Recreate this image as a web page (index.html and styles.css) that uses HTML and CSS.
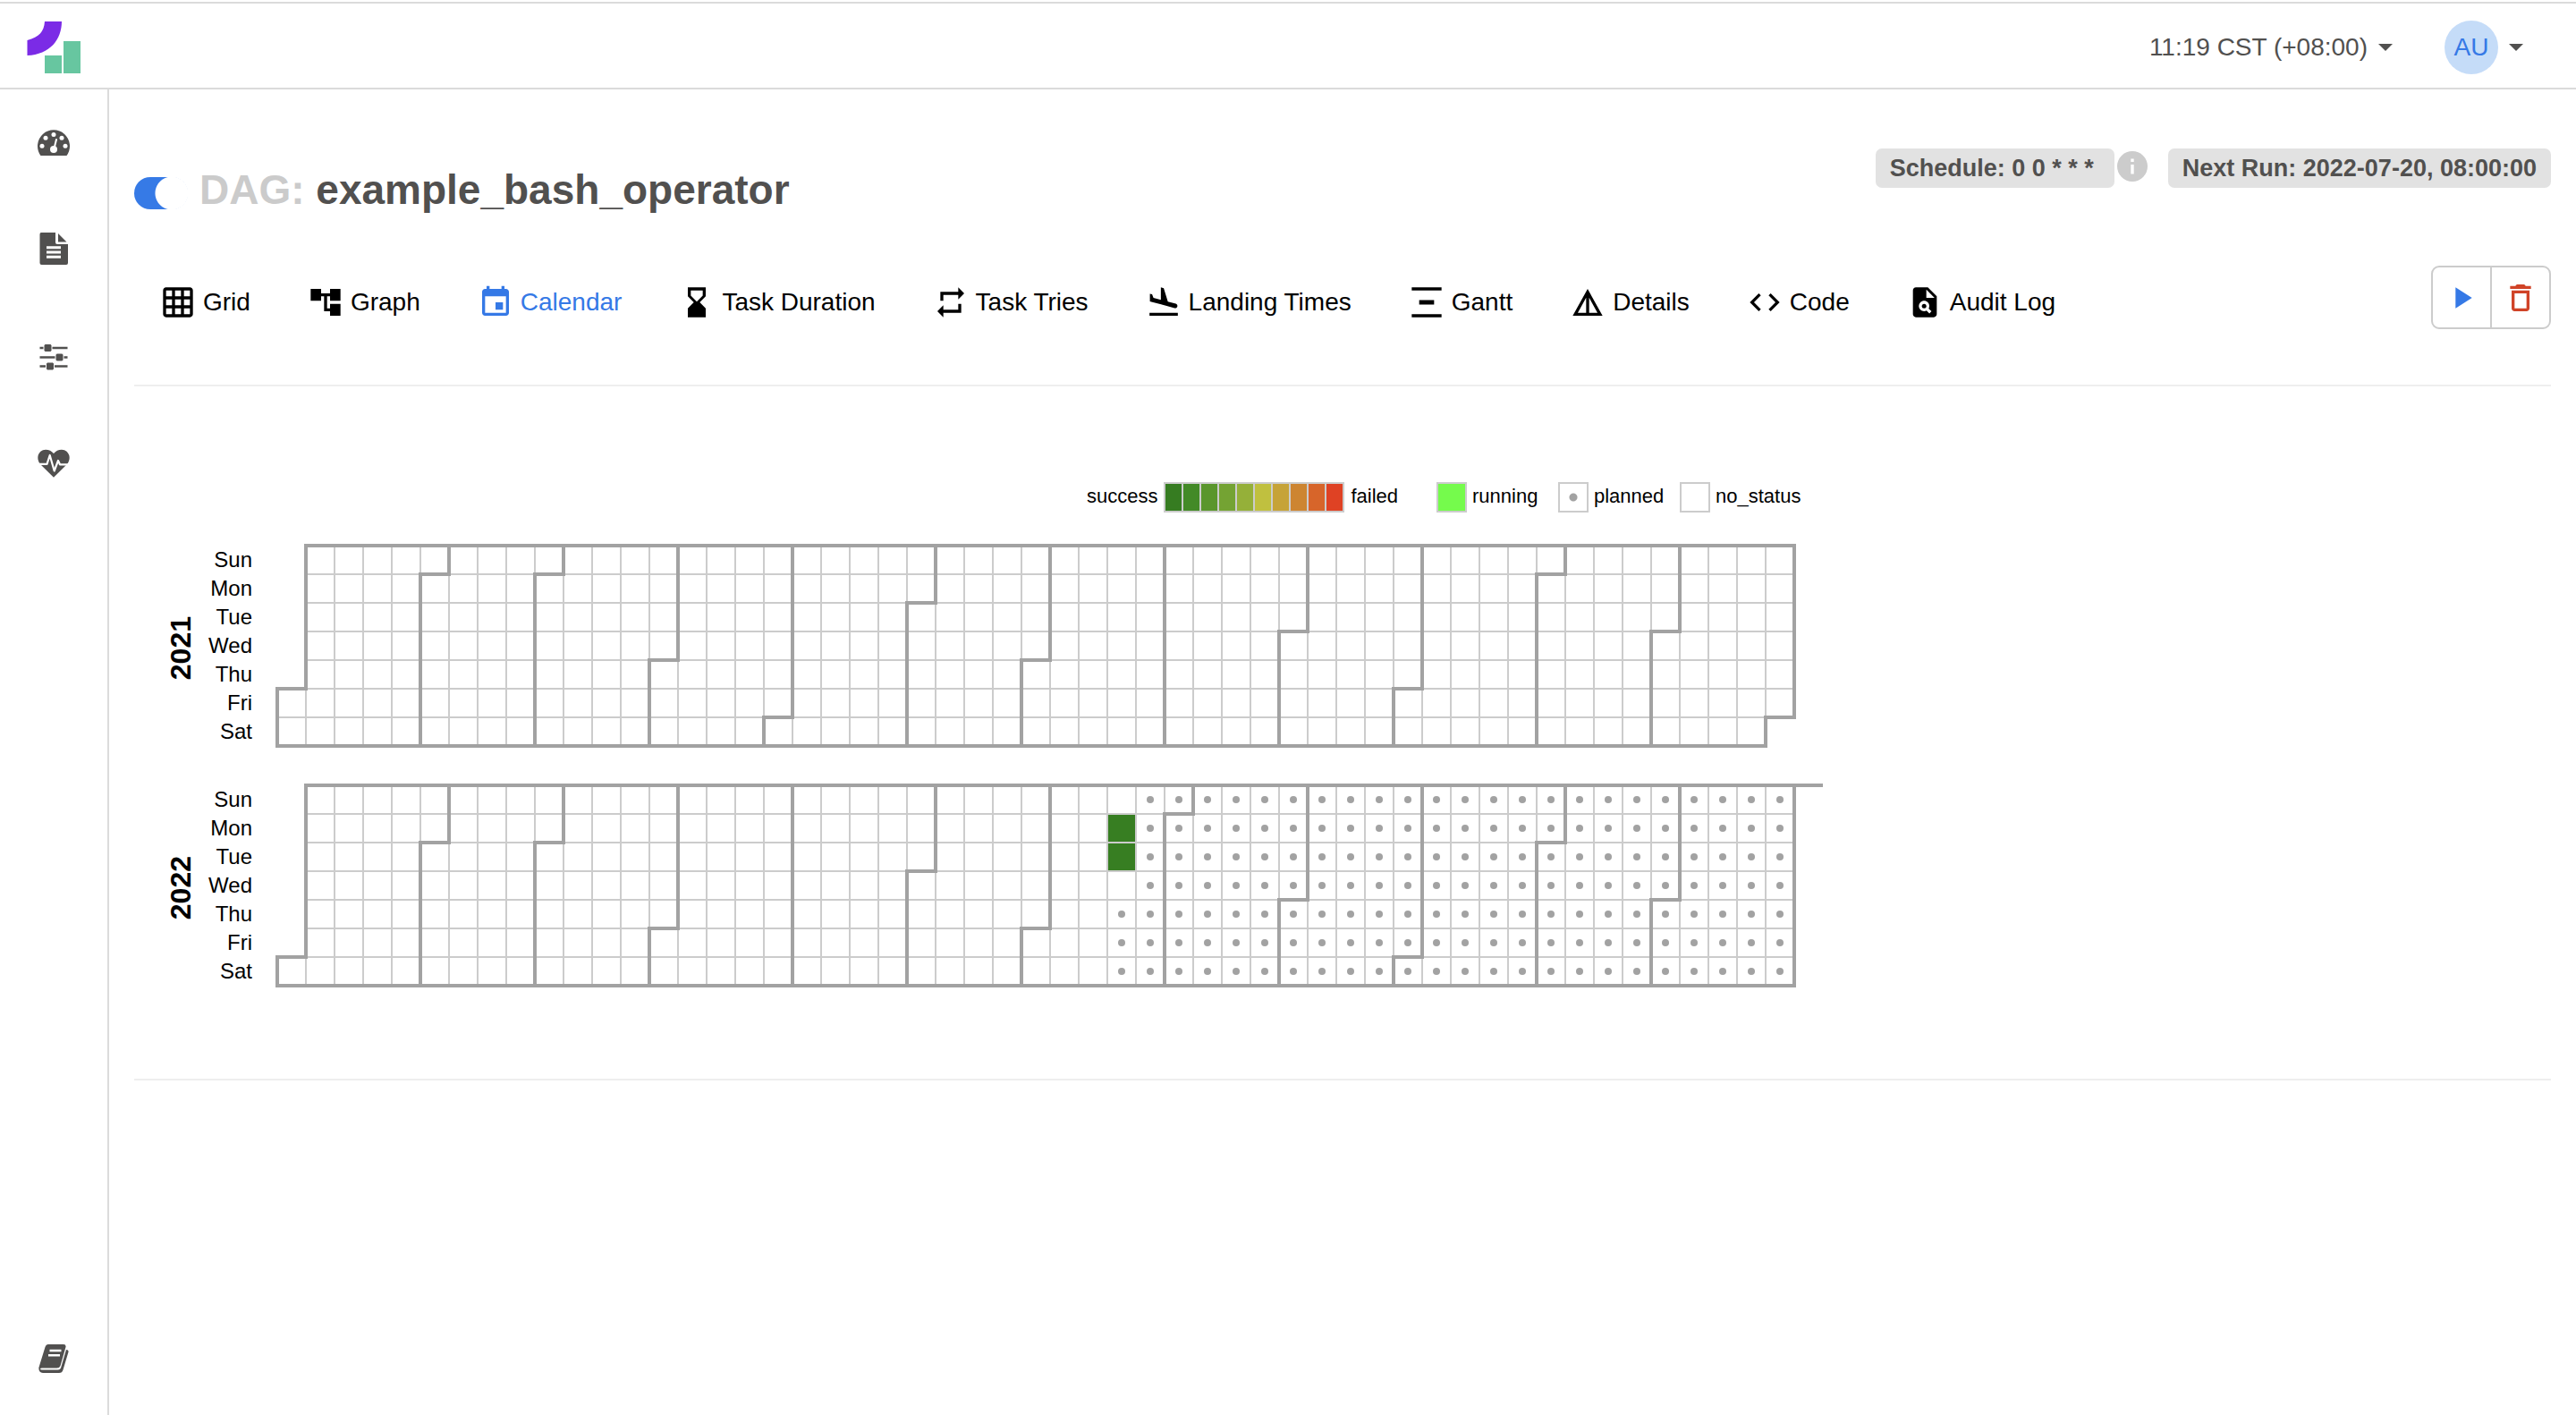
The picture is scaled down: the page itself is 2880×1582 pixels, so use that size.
FILE: index.html
```html
<!DOCTYPE html>
<html lang="en">
<head>
<meta charset="utf-8">
<title>example_bash_operator - Calendar - Airflow</title>
<link rel="stylesheet" href="styles.css">
</head>
<body>
<header class="topbar">
  <a class="brand" href="#" aria-label="Home">
    <svg width="60" height="58" viewBox="0 0 60 58"><path fill="#7b2be6" d="M20 0h19C39 20 26 37 0.500 38V21C14 17 19 12 20 0z"/><path fill="#67c6a0" d="M20 38h19v20H20zM41 22h19v36H41z"/></svg>
  </a>
  <div class="topbar-menus">
    <button class="menu" type="button">11:19 CST (+08:00)<span class="caret"></span></button>
    <button class="menu" type="button" aria-label="User menu"><span class="avatar">AU</span><span class="caret"></span></button>
  </div>
</header>
<div class="shell">
  <nav class="sidebar" aria-label="Main">
    <a href="#" aria-label="DAGs"><svg class="side-icon" viewBox="0 0 40 40"><path d="M5.500 34A18 18 0 1 1 34.500 34z"/><g fill="#fff"><circle cx="7" cy="23.300" r="2.500"/><circle cx="11" cy="14.300" r="2.500"/><circle cx="20" cy="10.600" r="2.500"/><circle cx="29" cy="14.300" r="2.500"/><circle cx="33" cy="23.300" r="2.500"/><circle cx="20" cy="27" r="4"/></g><path d="M20.500 26L23 16" stroke="#fff" stroke-width="2" stroke-linecap="round"/></svg></a>
    <a href="#" aria-label="Datasets"><svg class="side-icon" viewBox="0 0 40 40"><path d="M6 0h16v11q0 2 2 2h12v21q0 2-2 2H6.500q-2 0-2-2V2q0-2 1.500-2zM25 1l9.500 9.500H25z"/><path d="M12 16.800h16M12 22h16M12 27.200h16" stroke="#fff" stroke-width="3"/></svg></a>
    <a href="#" aria-label="Admin"><svg class="side-icon" viewBox="0 0 40 40"><path d="M4.500 9h31M4.500 19.500h31M4.500 29.500h31" stroke="#51504f" stroke-width="2.600"/><g stroke="#fff" stroke-width="1"><rect x="9" y="4.500" width="9" height="9" rx="2"/><rect x="22" y="15" width="9" height="9" rx="2"/><rect x="11.500" y="25" width="9" height="9" rx="2"/></g></svg></a>
    <a href="#" aria-label="Health"><svg class="side-icon" viewBox="0 0 40 40"><path d="M20 33.700L5 19C-1 11 4 2.700 11 2.700Q16.500 2.700 20 7Q23.500 2.700 29 2.700C36 2.700 41 11 35 19z"/><path d="M1 18.800h11.500L15.700 9l5 17.500L25 15l2 4.300h12" fill="none" stroke="#fff" stroke-width="2.200" stroke-linejoin="round"/></svg></a>
    <a class="sidebar-docs" href="#" aria-label="Documentation"><svg class="side-icon" viewBox="0 0 40 40"><path d="M14 5h17q3 0 2.500 3l-6 21q-1 2.500-4 2.500H7q-2 0-2 1t2 1h18q2 0 3-2l6-20.500q3 0 2.500 2.500l-6 20q-1 3.500-4.500 3.500H8q-5 0-4.600-6L10.500 8q1-3 3.500-3z"/><path d="M15.500 12h13M14 17.300h13" stroke="#fff" stroke-width="2.400"/></svg></a>
  </nav>
  <main class="content">
    <div class="dag-head">
      <div class="dag-title">
        <input class="toggle" type="checkbox" role="switch" id="pause" aria-label="Pause or unpause DAG" checked>
        <h1><label for="pause">DAG:</label> example_bash_operator</h1>
      </div>
      <div class="dag-labels">
        <span class="tag tag-schedule">Schedule: 0 0 * * *</span>
        <svg class="info" viewBox="0 0 24 24" role="img" aria-label="Schedule info"><circle cx="12" cy="12" r="12" fill="#ccc"/><path fill="#fff" d="M10.800 6h2.400v2.400h-2.400zM10.800 10.500h2.400V18h-2.400z"/></svg>
        <span class="tag">Next Run: 2022-07-20, 08:00:00</span>
      </div>
    </div>
    <div class="tab-row">
      <nav class="tabs" aria-label="DAG views">
        <a href="#"><svg class="icon" viewBox="0 0 24 24"><path d="M20 2H4c-1.100 0-2 .9-2 2v16c0 1.100.9 2 2 2h16c1.100 0 2-.9 2-2V4c0-1.100-.9-2-2-2zM8 20H4v-4h4v4zm0-6H4v-4h4v4zm0-6H4V4h4v4zm6 12h-4v-4h4v4zm0-6h-4v-4h4v4zm0-6h-4V4h4v4zm6 12h-4v-4h4v4zm0-6h-4v-4h4v4zm0-6h-4V4h4v4z"/></svg>Grid</a>
        <a href="#"><svg class="icon" viewBox="0 0 24 24"><path d="M22 11V3h-7v3H9V3H2v8h7V8h2v10h4v3h7v-8h-7v3h-2V8h2v3h7z"/></svg>Graph</a>
        <a class="active" href="#" aria-current="page"><svg class="icon" viewBox="0 0 24 24"><path d="M17 12h-5v5h5v-5zM16 1v2H8V1H6v2H5c-1.110 0-1.990.9-1.990 2L3 19c0 1.100.89 2 2 2h14c1.100 0 2-.9 2-2V5c0-1.100-.9-2-2-2h-1V1h-2zm3 18H5V8h14v11z"/></svg>Calendar</a>
        <a href="#"><svg class="icon" viewBox="0 0 24 24"><path d="M18 22l-.01-6L14 12l3.990-4.010L18 2H6v6l4 4-4 3.990V22h12zM8 7.500V4h8v3.500l-4 4-4-4z"/></svg>Task Duration</a>
        <a href="#"><svg class="icon" viewBox="0 0 24 24"><path d="M7 7h10v3l4-4-4-4v3H5v6h2V7zm10 10H7v-3l-4 4 4 4v-3h12v-6h-2v4z"/></svg>Task Tries</a>
        <a href="#"><svg class="icon" viewBox="0 0 24 24"><path d="M2.500 19h19v2h-19zm7.180-5.730l4.350 1.160 5.310 1.420c.8.210 1.620-.26 1.840-1.060.21-.8-.26-1.620-1.060-1.840l-5.310-1.420-2.760-9.020L10.120 2v8.280L5.150 8.950l-.93-2.320-1.450-.39v5.170l1.600.43 5.310 1.430z"/></svg>Landing Times</a>
        <a href="#"><svg class="icon" viewBox="0 0 24 24"><path d="M22 2v2H2V2h20zM7 10.500v3h10v-3H7zM2 20v2h20v-2H2z"/></svg>Gantt</a>
        <a href="#"><svg class="icon" viewBox="0 0 24 24"><path d="M12 3L2 21h20L12 3zm1 5.920L18.600 19H13V8.920zm-2 0V19H5.400L11 8.920z"/></svg>Details</a>
        <a href="#"><svg class="icon" viewBox="0 0 24 24"><path d="M9.400 16.600L4.800 12l4.600-4.600L8 6l-6 6 6 6 1.400-1.400zm5.200 0l4.600-4.600-4.600-4.600L16 6l6 6-6 6-1.400-1.400z"/></svg>Code</a>
        <a href="#"><svg class="icon" viewBox="0 0 24 24"><path d="M14 2H6c-1.100 0-1.990.9-1.990 2L4 20c0 1.100.89 2 1.990 2H18c1.100 0 2-.9 2-2V8l-6-6zm1.040 17.450-1.880-1.880c-1.330.71-3.010.53-4.130-.59-1.370-1.370-1.370-3.580 0-4.950 1.370-1.370 3.580-1.370 4.950 0 1.120 1.120 1.310 2.800.59 4.130l1.880 1.880-1.410 1.410zM13 9V3.500L18.500 9H13z"/><circle cx="11.500" cy="14.500" r="1.500"/></svg>Audit Log</a>
      </nav>
      <div class="actions">
        <button class="run" type="button" aria-label="Trigger DAG"><svg class="icon" viewBox="0 0 24 24"><path d="M8 5v14l11-7z"/></svg></button>
        <button class="delete" type="button" aria-label="Delete DAG"><svg class="icon" viewBox="0 0 24 24"><path d="M6 19c0 1.100.9 2 2 2h8c1.100 0 2-.9 2-2V7H6v12zM8 9h8v10H8V9zm7.500-5l-1-1h-5l-1 1H5v2h14V4z"/></svg></button>
      </div>
    </div>
    <hr>
    <section class="calendar" aria-label="Calendar">
      <div class="legend">
        <div class="scale">
          <span>success</span>
          <span class="ramp"><i class="r0"></i><i class="r1"></i><i class="r2"></i><i class="r3"></i><i class="r4"></i><i class="r5"></i><i class="r6"></i><i class="r7"></i><i class="r8"></i><i class="r9"></i></span>
          <span>failed</span>
        </div>
        <ul class="states">
          <li><span class="box running"></span>running</li>
          <li><span class="box planned"></span>planned</li>
          <li><span class="box"></span>no_status</li>
        </ul>
      </div>
      <div class="year">
        <h2>2021</h2>
        <ul class="days"><li>Sun</li><li>Mon</li><li>Tue</li><li>Wed</li><li>Thu</li><li>Fri</li><li>Sat</li></ul>
        <svg class="plot" width="1732" height="228" viewBox="-2 -2 1732 228" role="img" aria-label="Runs in 2021">
          <defs>
            <pattern id="cell" width="32" height="32" patternUnits="userSpaceOnUse"><path fill="#ccc" d="M0 0h32v32H0z"/><path fill="#fff" d="M1 1h30v30H1z"/></pattern>
            <pattern id="dot" width="32" height="32" patternUnits="userSpaceOnUse"><circle cx="16" cy="16" r="4" fill="#a2a2a2"/></pattern>
          </defs>
          <path fill="url(#cell)" d="M32 0H1696V192H1664V224H0V160H32z"/>
          <path class="months" d="M32 0H1696V192H1664V224H0V160H32zM192 0V32H160V224M320 0V32H288V224M448 0V128H416V224M576 0V192H544V224M736 0V64H704V224M864 0V128H832V224M992 0V224M1152 0V96H1120V224M1280 0V160H1248V224M1440 0V32H1408V224M1568 0V96H1536V224"/>
        </svg>
      </div>
      <div class="year">
        <h2>2022</h2>
        <ul class="days"><li>Sun</li><li>Mon</li><li>Tue</li><li>Wed</li><li>Thu</li><li>Fri</li><li>Sat</li></ul>
        <svg class="plot" width="1732" height="228" viewBox="-2 -2 1732 228" role="img" aria-label="Runs in 2022">
          <path fill="url(#cell)" d="M32 0H1696V224H0V192H32z"/>
          <path fill="#377e22" d="M929 33h30v30h-30zM929 65h30v30h-30z"/>
          <path fill="url(#dot)" d="M960 0H1696V224H928V128H960z"/>
          <path class="months" d="M1728 0H32V192H0V224H1696V0M192 0V64H160V224M320 0V64H288V224M448 0V160H416V224M576 0V224M736 0V96H704V224M864 0V160H832V224M1024 0V32H992V224M1152 0V128H1120V224M1280 0V192H1248V224M1440 0V64H1408V224M1568 0V128H1536V224"/>
        </svg>
      </div>
    </section>
    <hr>
  </main>
</div>
</body>
</html>
```

FILE: styles.css
```css
* { box-sizing: border-box; }

body {
  margin: 0;
  min-height: 100vh;
  display: flex;
  flex-direction: column;
  padding-top: 2px;
  background: #fff;
  color: #51504f;
  font: 28px/40px "Liberation Sans", Arial, sans-serif;
}

a { color: inherit; text-decoration: none; }
ul { list-style: none; margin: 0; padding: 0; }
button { font: inherit; color: inherit; background: none; border: 0; padding: 0; cursor: pointer; }
svg { display: block; fill: currentColor; }

hr { margin: 0; border: 0; height: 2px; background: #eee; }

/* Top bar */
.topbar {
  display: flex;
  justify-content: space-between;
  align-items: center;
  height: 98px;
  padding: 4px 59px 0 30px;
  border: solid #dbdbdb;
  border-width: 2px 0;
}
.topbar-menus { display: flex; align-items: center; gap: 58px; }
.menu { display: flex; align-items: center; gap: 12px; }
.caret {
  border: 8px solid transparent;
  border-top-color: currentColor;
  border-bottom: 0;
}
.avatar {
  width: 60px;
  border-radius: 50%;
  background: #c5dcf8;
  color: #3579e6;
  line-height: 60px;
  text-align: center;
}

/* Side navigation */
.shell { flex: 1; display: flex; }
.sidebar {
  flex: none;
  display: flex;
  flex-direction: column;
  width: 122px;
  padding-bottom: 4px;
  border-right: 2px solid #dbdbdb;
}
.sidebar a { display: flex; align-items: center; justify-content: center; height: 120px; }
.sidebar .sidebar-docs { margin-top: auto; }
.side-icon { width: 40px; height: 40px; }

/* DAG heading */
.content { flex: 1; min-width: 0; padding: 66px 28px 0; }
.dag-head { display: flex; justify-content: space-between; align-items: flex-start; }
.dag-title { display: flex; align-items: flex-end; gap: 13px; margin-top: 18px; }
.dag-title h1 { margin: 0; font-size: 46px; line-height: 56px; }
.dag-title label { color: #cbcbcb; }
.toggle {
  appearance: none;
  width: 60px;
  height: 36px;
  margin: 0 0 6px;
  border-radius: 18px;
  background: radial-gradient(circle at 42px 18px, #fff 18px, #367ae6 19px);
}
.dag-labels { display: flex; align-items: flex-start; }
.tag {
  padding: 0 16px;
  border-radius: 7px;
  background: #e2e2e2;
  font-size: 27px;
  font-weight: bold;
  line-height: 44px;
}
.tag-schedule { padding-right: 23px; }
.info { width: 34px; height: 34px; margin: 3px 23px 0 3px; }

/* View tabs */
.tab-row { display: flex; justify-content: space-between; align-items: center; margin: 57px 0 62px; }
.tabs { display: flex; color: #000; margin-top: 10px; }
.tabs a { display: flex; align-items: center; gap: 8px; padding: 0 32px; }
.tabs a:first-child { padding-left: 29px; }
.tabs .active { color: #3579e6; }
.icon { width: 40px; height: 40px; }
.actions { display: flex; border: 2px solid #ccc; border-radius: 9px; }
.actions button { display: flex; align-items: center; justify-content: center; width: 64px; height: 67px; }
.actions .run { color: #3579e6; border-right: 2px solid #ccc; width: 66px; }
.actions .delete { color: #d04327; }

/* Calendar */
.calendar {
  width: max-content;
  padding: 107px 0 102px 34px;
  color: #000;
}
.legend {
  display: flex;
  justify-content: flex-end;
  gap: 43px;
  margin-bottom: 35px;
  padding-right: 26px;
  font-size: 22px;
  line-height: 32px;
}
.scale { display: flex; gap: 7px; }
.ramp { display: flex; gap: 2px; border: 2px solid #ccc; background: #ccc; }
.ramp i { width: 18px; }
.r0 { background: #367c21; }
.r1 { background: #438a27; }
.r2 { background: #5a962c; }
.r3 { background: #74a333; }
.r4 { background: #95b039; }
.r5 { background: #c0c03f; }
.r6 { background: #c6a338; }
.r7 { background: #cd8531; }
.r8 { background: #d7652a; }
.r9 { background: #df4224; }
.states { display: grid; grid-template-columns: repeat(3, 136px); }
.states li { display: flex; gap: 6px; }
.box { width: 34px; height: 34px; border: 2px solid #ccc; }
.running { background: #75fb4c; }
.planned { background: radial-gradient(circle, #a2a2a2 4px, transparent 5px); }

.year { display: flex; align-items: center; }
.year + .year { margin-top: 40px; }
.year h2 {
  margin: 6px 0 0;
  font-size: 32px;
  line-height: 36px;
  writing-mode: vertical-rl;
  transform: rotate(180deg);
}
.days {
  width: 62px;
  margin-right: 26px;
  font-size: 24px;
  line-height: 32px;
  text-align: right;
}
.months { fill: none; stroke: #a2a2a2; stroke-width: 4; }
```
